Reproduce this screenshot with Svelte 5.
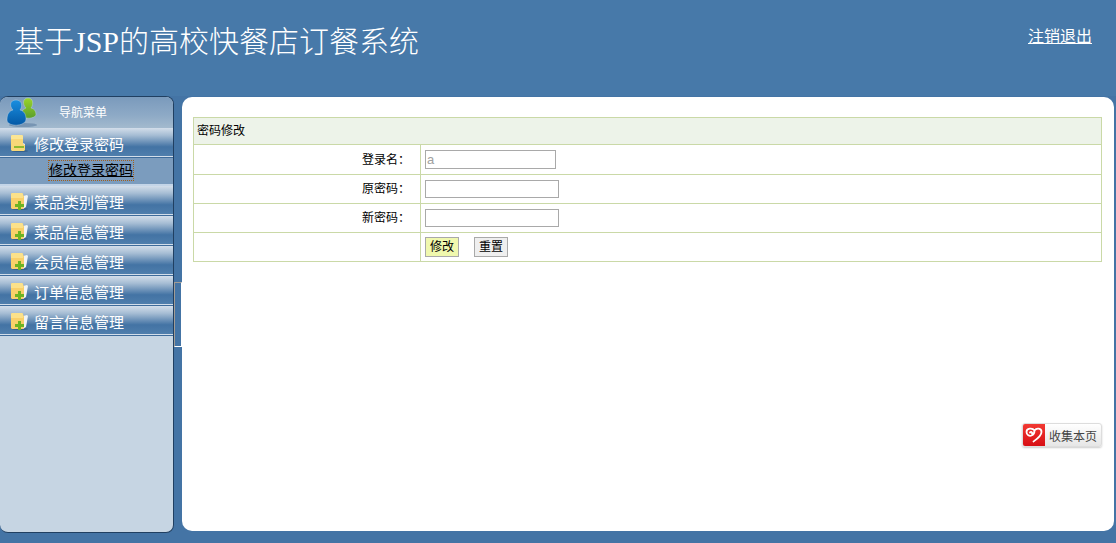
<script lang="ts">
	let login = $state('a');
	let oldPassword = $state('');
	let newPassword = $state('');
	let openMenu = $state(0);

	const menus = [
		{ name: '修改登录密码', children: ['修改登录密码'] },
		{ name: '菜品类别管理', children: [] },
		{ name: '菜品信息管理', children: [] },
		{ name: '会员信息管理', children: [] },
		{ name: '订单信息管理', children: [] },
		{ name: '留言信息管理', children: [] },
	];

	function toggleMenu(index: number) {
		openMenu = openMenu === index ? -1 : index;
	}

	function handleSubmit(event: Event) {
		event.preventDefault();
	}
</script>

<div class="page">
	<header class="header">
		<h1>基于JSP的高校快餐店订餐系统</h1>
		<a class="logout" href="#logout">注销退出</a>
	</header>

	<div class="body">
		<nav class="sidebar">
			<div class="sidebar-title">
				<svg width="32" height="30" viewBox="0 0 32 30" aria-hidden="true">
					<defs>
						<linearGradient id="green" x1="0" y1="0" x2="0" y2="1">
							<stop offset="0" stop-color="#9bd42a" />
							<stop offset="1" stop-color="#5a9f2c" />
						</linearGradient>
						<linearGradient id="blue" x1="0" y1="0" x2="0" y2="1">
							<stop offset="0" stop-color="#1a8fe0" />
							<stop offset="1" stop-color="#0459a6" />
						</linearGradient>
					</defs>
					<ellipse cx="17" cy="28" rx="14" ry="2" fill="#51749a" opacity="0.5" />
					<g stroke="#c3dcec" stroke-opacity="0.4">
						<path d="M15 19C15 15 17 12 20 11C16 7 17 1 22 1C27 1 28 7 25 11C29 12 30 15 30 18C28 22 19 22 15 19Z" fill="url(#green)" />
						<path d="M1 23C1 17 3 14 7 13C3 9 4 3 10 3C16 3 17 9 14 13C18 14 20 17 20 22C20 30 1 30 1 23Z" fill="url(#blue)" />
					</g>
				</svg>
				<span>导航菜单</span>
			</div>

			<ul class="menu">
				{#each menus as menu, i}
					<li>
						<button class="menu-item" type="button" onclick={() => toggleMenu(i)}>
							<svg width="19" height="18" viewBox="0 0 19 18" aria-hidden="true">
								<ellipse cx="10" cy="16" rx="8" ry="1" fill="#24486d" opacity="0.5" />
								{#if openMenu === i}
									<path d="M13 8l2 1v5l-2 2z" fill="#e6eef4" />
									<path d="M2 0h10l1 1v8l2 1v5l-1 1H2l-1-1V1z" fill="#f9d878" />
									<path d="M2 0h10l1 1v3H1V1z" fill="#fbe594" />
									<path d="M4 11h10v2H4z" fill="#8fba32" />
								{:else}
									<path d="M13 3l4-1l1 1l-2 11l-3 2z" fill="#eff4f7" />
									<path d="M2 0h10l1 1l1 3v10l-1 2H2l-1-1V1z" fill="#f9d06a" />
									<path d="M2 0h10l1 1v4H1V1z" fill="#fbe18a" />
									<path d="M8 8h3v3h3v3h-3v3H8v-3H5v-3h3z" fill="#6db423" />
								{/if}
							</svg>
							<span>{menu.name}</span>
						</button>
						{#if openMenu === i && menu.children.length > 0}
							<ul class="submenu">
								{#each menu.children as child}
									<li><a href="#password">{child}</a></li>
								{/each}
							</ul>
						{/if}
					</li>
				{/each}
			</ul>
		</nav>

		<button class="splitter" type="button" aria-label="收起菜单"></button>

		<main class="content">
			<form onsubmit={handleSubmit}>
				<table>
					<colgroup>
						<col class="label-col" />
						<col />
					</colgroup>
					<thead>
						<tr><th colspan="2">密码修改</th></tr>
					</thead>
					<tbody>
						<tr>
							<td class="label"><label for="login">登录名：</label></td>
							<td class="login-cell"><input id="login" class="login" type="text" bind:value={login} disabled /></td>
						</tr>
						<tr>
							<td class="label"><label for="old">原密码：</label></td>
							<td><input id="old" type="password" bind:value={oldPassword} /></td>
						</tr>
						<tr>
							<td class="label"><label for="new">新密码：</label></td>
							<td><input id="new" type="password" bind:value={newPassword} /></td>
						</tr>
						<tr>
							<td class="label"></td>
							<td>
								<div class="actions">
									<button class="btn btn-primary" type="submit">修改</button>
									<button class="btn" type="reset">重置</button>
								</div>
							</td>
						</tr>
					</tbody>
				</table>
			</form>

			<button class="collect" type="button">
				<span class="collect-icon">
					<svg width="18" height="16" viewBox="0 0 18 16" fill="none" stroke="#fff" stroke-width="1.8" stroke-linecap="round" stroke-linejoin="round" aria-hidden="true">
						<path d="M8.5 14.5C12 12 16.5 9 16.5 5C16.5 1 11.5 .5 9.5 3.5C7.5 .5 1.5 1 1.5 5C1.5 8 4.5 9.5 6.5 8.5C9 7.500 9.500 5 9.500 3.500M5 5.500C6 4.500 7.500 5 7 6.500" />
					</svg>
				</span>
				<span class="collect-text">收集本页</span>
			</button>
		</main>
	</div>
</div>

<style>
	:global(body) {
		margin: 0;
	}

	.page {
		display: flex;
		flex-direction: column;
		box-sizing: border-box;
		min-height: 100vh;
		padding-bottom: 10px;
		background: #4474a5;
		font-family: 'Liberation Sans', 'Noto Sans CJK SC', sans-serif;
		font-size: 12px;
		color: #000;
	}

	.header {
		display: flex;
		justify-content: space-between;
		align-items: flex-start;
		box-sizing: border-box;
		height: 96px;
		padding: 22px 24px 0 14px;
		background: #4779a9;
		color: #fff;
	}

	h1 {
		margin: 0;
		font: 30px/40px 'Liberation Serif', 'Noto Sans CJK SC', serif;
		font-weight: 300;
	}

	.logout {
		font-size: 16px;
		line-height: 30px;
		color: #fff;
	}

	.body {
		display: flex;
		flex: 1;
		padding-right: 2px;
	}

	.sidebar {
		box-sizing: border-box;
		width: 174px;
		border: 1px solid #203f61;
		border-left: 0;
		border-radius: 8px;
		overflow: hidden;
		background: #c6d5e3;
	}

	.sidebar-title {
		display: flex;
		align-items: center;
		gap: 21px;
		box-sizing: border-box;
		height: 31px;
		padding: 0 0 2px 6px;
		background: linear-gradient(#7a9abc, #8eaac6 60%, #a3bace);
		color: #fff;
	}

	.menu,
	.submenu {
		list-style: none;
		margin: 0;
		padding: 0;
	}

	.menu-item {
		display: flex;
		align-items: center;
		gap: 5px;
		box-sizing: border-box;
		width: 100%;
		height: 30px;
		padding: 2px 0 0 10px;
		border: 0;
		border-bottom: 1px solid #3f6c9b;
		background: linear-gradient(#d3deea, #a6bdd4 25%, #4373a4 65%, #4f7eac 96%, #d3deea 97%);
		font-family: inherit;
		font-size: 15px;
		color: #fff;
		cursor: pointer;
	}

	.submenu li {
		box-sizing: border-box;
		height: 28px;
		padding: 3px 0 0 49px;
		border-bottom: 2px solid #c4d5e8;
		background: #7b9cbe;
	}

	.submenu a {
		display: inline-block;
		outline: 1px dotted #a15e1c;
		font-size: 14px;
		line-height: 19px;
		color: #000;
	}

	.splitter {
		align-self: center;
		box-sizing: border-box;
		width: 8px;
		height: 65px;
		padding: 0;
		border: 1px solid #fff;
		border-top-color: #a19c96;
		border-left-color: #a19c96;
		background: #4474a5;
		cursor: pointer;
	}

	.content {
		position: relative;
		flex: 1;
		box-sizing: border-box;
		margin: 1px 0 2px;
		padding: 20px 12px 0 11px;
		border-radius: 10px;
		background: #fff;
	}

	table {
		width: 100%;
		border-collapse: collapse;
		table-layout: fixed;
	}

	.label-col {
		width: 25%;
	}

	th,
	td {
		box-sizing: border-box;
		height: 29px;
		padding: 0 4px;
		border: 1px solid #cad9a7;
	}

	th {
		height: 27px;
		padding: 0 3px 3px;
		background: #edf3e9;
		font-weight: normal;
		text-align: left;
	}

	.label {
		padding: 0 10px 3px 0;
		text-align: right;
	}

	.login-cell {
		height: 30px;
	}

	input {
		display: block;
		box-sizing: border-box;
		width: 134px;
		height: 18px;
		padding: 0 1px;
		border: 1px solid #a9a9a9;
		background: #fff;
		font-family: inherit;
		font-size: 13px;
	}

	.login {
		width: 131px;
		height: 19px;
		color: #a0a0a0;
	}

	.actions {
		display: flex;
		gap: 15px;
	}

	.btn {
		width: 34px;
		height: 20px;
		padding: 0;
		border: 1px solid #a9a9a9;
		background: #efefef;
		font-family: inherit;
		font-size: 12px;
		line-height: 16px;
		color: #000;
	}

	.btn-primary {
		background: #f0f8ae;
	}

	.collect {
		position: absolute;
		right: 12px;
		bottom: 84px;
		display: flex;
		align-items: center;
		width: 80px;
		height: 24px;
		padding: 0;
		border: 1px solid #ddd;
		border-radius: 3px;
		overflow: hidden;
		background: linear-gradient(#fff, #e6e6e6);
		box-shadow: 0 1px 2px #ccc;
		font-family: inherit;
		font-size: 12px;
		color: #444;
	}

	.collect-icon {
		display: flex;
		align-items: center;
		justify-content: center;
		width: 22px;
		height: 24px;
		background: linear-gradient(#f33b34, #d60d13);
	}

	.collect-text {
		flex: 1;
		white-space: nowrap;
	}
</style>
